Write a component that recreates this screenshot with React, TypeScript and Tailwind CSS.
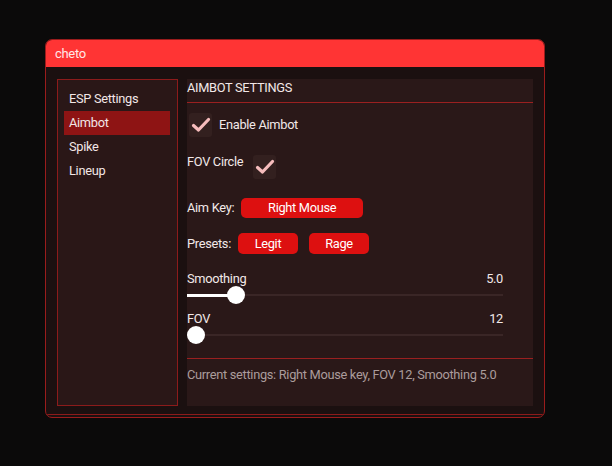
import React from "react";

function Check() {
  return (
    <div className="w-[23px] h-[24px] rounded-[3px] bg-[#33201f] flex items-center justify-center">
      <svg width="20" height="16" viewBox="0 0 20 16">
        <path d="M2.5 8.5 L7.5 13 L17.5 2.5" stroke="#f6bcbc" strokeWidth="3.2" fill="none" strokeLinecap="round" strokeLinejoin="round" />
      </svg>
    </div>
  );
}

function Slider({ label, value, pct }: { label: string; value: string; pct: number }) {
  return (
    <div className="w-[316px]">
      <div className="flex justify-between h-[16px] leading-[16px] text-[#f2e8e8]">
        <span>{label}</span>
        <span>{value}</span>
      </div>
      <div className="relative h-[18px] mt-[-1px]">
        <div className="absolute left-0 right-0 top-[8px] h-[2px] bg-[#3a2626]" />
        <div className="absolute left-0 top-[7.5px] h-[3px] bg-white" style={{ width: `${pct}%` }} />
        <div
          className="absolute top-0 w-[18px] h-[18px] rounded-full bg-white"
          style={{ left: `calc(${pct}% - ${pct === 0 ? 0 : 9}px)` }}
        />
      </div>
    </div>
  );
}

export default function App() {
  return (
    <div
      className="w-[612px] h-[466px] bg-[#0b0a0a] pt-[39px] pl-[45px] text-[12.8px] tracking-[-0.3px]"
      style={{ fontFamily: 'Roboto, "Noto Sans", sans-serif' }}
    >
      <div className="w-[500px] h-[379px] rounded-[7px] border border-[#9a1c1c] bg-[#1b1010] overflow-hidden flex flex-col">
        <div className="h-[27px] bg-[#ff3434] flex items-center px-[9px] text-[#ffe8e8] text-[13px] shrink-0">cheto</div>
        <div className="flex-1 flex flex-col pt-[12px]">
          <div className="flex gap-[9px] h-[327px] px-[11px]">
            <div className="w-[121px] border border-[#8c1b1b] bg-[#2a1717] pt-[7px] pl-[6px] text-[#f2e6e6]">
              {["ESP Settings", "Aimbot", "Spike", "Lineup"].map((t) => (
                <div
                  key={t}
                  className={`w-[106px] h-[24px] leading-[24px] px-[5px] ${t === "Aimbot" ? "bg-[#8e1414]" : ""}`}
                >
                  {t}
                </div>
              ))}
            </div>
            <div className="flex-1 bg-[#2a1818] text-[#f2e8e8]">
              <div className="h-[24px] pt-[1px] leading-[16px] border-b border-[#9a2020] uppercase">AIMBOT SETTINGS</div>
              <div className="flex items-center mt-[10px] ml-[2px] gap-[7px]">
                <Check />
                <span>Enable Aimbot</span>
              </div>
              <div className="flex items-start mt-[17px] gap-[10px]">
                <span className="leading-[16px]">FOV Circle</span>
                <div className="mt-[1px]">
                  <Check />
                </div>
              </div>
              <div className="flex items-center mt-[19px] gap-[7px]">
                <span>Aim Key:</span>
                <div className="w-[122px] h-[20px] rounded-[5px] bg-[#dd1010] flex items-center justify-center text-white">Right Mouse</div>
              </div>
              <div className="flex items-center mt-[15px] gap-[7px]">
                <span>Presets:</span>
                <div className="w-[60px] h-[21px] rounded-[5px] bg-[#dd1010] flex items-center justify-center text-white">Legit</div>
                <div className="ml-[4px] w-[60px] h-[21px] rounded-[5px] bg-[#dd1010] flex items-center justify-center text-white">Rage</div>
              </div>
              <div className="mt-[17px]">
                <Slider label="Smoothing" value="5.0" pct={15.5} />
              </div>
              <div className="mt-[7px]">
                <Slider label="FOV" value="12" pct={0} />
              </div>
              <div className="mt-[14px] border-t border-[#9a2020] pt-[8px] leading-[16px] text-[#ab9c9c]">
                Current settings: Right Mouse key, FOV 12, Smoothing 5.0
              </div>
            </div>
          </div>
          <div className="mt-[8px] border-t border-[#8c1b1b]" />
        </div>
      </div>
    </div>
  );
}
